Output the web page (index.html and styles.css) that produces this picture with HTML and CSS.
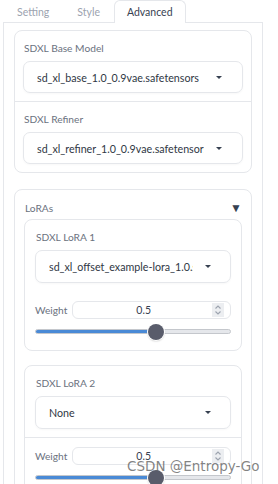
FILE: index.html
```html
<!DOCTYPE html>
<html lang="en">
<head>
  <meta charset="UTF-8">
  <meta name="viewport" content="width=device-width, initial-scale=1">
  <title>Advanced</title>
  <link rel="stylesheet" href="styles.css">
</head>
<body>

  <!-- Tabs -->
  <div class="tabs">
    <button class="tab">Setting</button>
    <button class="tab">Style</button>
    <button class="tab tab-active">Advanced</button>
  </div>

  <div class="panel">

    <!-- Models -->
    <div class="card">
      <div class="section">
        <div class="label">SDXL Base Model</div>
        <div class="dropdown">
          <span class="dropdown-text">sd_xl_base_1.0_0.9vae.safetensors</span>
          <span class="caret"></span>
        </div>
      </div>
      <div class="section section-split">
        <div class="label">SDXL Refiner</div>
        <div class="dropdown">
          <span class="dropdown-text">sd_xl_refiner_1.0_0.9vae.safetensors</span>
          <span class="caret"></span>
        </div>
      </div>
    </div>

    <!-- LoRAs -->
    <div class="card card-loras">
      <div class="accordion-head">
        <span class="label">LoRAs</span>
        <span class="arrow">&#9660;</span>
      </div>

      <div class="lora">
        <div class="lora-top">
          <div class="label">SDXL LoRA 1</div>
          <div class="dropdown dropdown-lora">
            <span class="dropdown-text">sd_xl_offset_example-lora_1.0.safetensors</span>
            <span class="caret"></span>
          </div>
        </div>
        <div class="weight">
          <div class="weight-row">
            <span class="weight-label">Weight</span>
            <div class="number">
              <span class="number-value">0.5</span>
              <span class="spin">
                <svg width="8" height="12" viewBox="0 0 8 12"><path d="M1.5 4.5 L4 2 L6.5 4.5 M1.5 7.5 L4 10 L6.5 7.5" fill="none" stroke="#9ca3af" stroke-width="1.1"/></svg>
              </span>
            </div>
          </div>
          <div class="slider">
            <div class="slider-fill" style="width: 61.7%"></div>
            <div class="slider-thumb" style="left: 61.7%"></div>
          </div>
        </div>
      </div>

      <div class="lora">
        <div class="lora-top lora-top-split">
          <div class="label">SDXL LoRA 2</div>
          <div class="dropdown dropdown-lora">
            <span class="dropdown-text">None</span>
            <span class="caret"></span>
          </div>
        </div>
        <div class="weight">
          <div class="weight-row">
            <span class="weight-label">Weight</span>
            <div class="number">
              <span class="number-value">0.5</span>
              <span class="spin">
                <svg width="8" height="12" viewBox="0 0 8 12"><path d="M1.5 4.5 L4 2 L6.5 4.5 M1.5 7.5 L4 10 L6.5 7.5" fill="none" stroke="#9ca3af" stroke-width="1.1"/></svg>
              </span>
            </div>
          </div>
          <div class="slider">
            <div class="slider-fill" style="width: 61.7%"></div>
            <div class="slider-thumb" style="left: 61.7%"></div>
          </div>
        </div>
      </div>
    </div>

  </div>

  <div class="watermark">CSDN @Entropy-Go</div>

</body>
</html>
```

FILE: styles.css
```css
/* Reset and Body */
* {
  box-sizing: border-box;
  margin: 0;
  padding: 0;
}

body {
  font-family: Lato, "Noto Sans", sans-serif;
  background-color: #fff;
  color: #374151;
  width: 278px;
  height: 484px;
  overflow: hidden;
  position: relative;
}

/* Tabs */
.tabs {
  display: flex;
  height: 23px;
  padding-left: 3px;
  position: relative;
  z-index: 1;
}

.tab {
  font-family: inherit;
  font-size: 10.5px;
  color: #9ca3af;
  background: none;
  border: 1px solid transparent;
  border-bottom: none;
  border-radius: 6px 6px 0 0;
  padding: 0 13px;
  height: 23px;
}

.tab-active {
  color: #374151;
  background-color: #fff;
  border-color: #e5e7eb;
  padding: 0 12px;
}

/* Panel */
.panel {
  margin: -1px 15px 0 3px;
  border: 1px solid #e5e7eb;
  border-bottom: none;
  padding: 7px 10px 0 10px;
  display: flex;
  flex-direction: column;
  gap: 16px;
}

.card {
  border: 1px solid #e5e7eb;
  border-radius: 8px;
}

.section {
  padding: 8px;
}

.section-split {
  border-top: 1px solid #e5e7eb;
}

.label {
  font-size: 10.2px;
  color: #6b7280;
  line-height: 18px;
  padding-left: 1px;
  margin-bottom: 4px;
}

/* Dropdown */
.dropdown {
  height: 32px;
  border: 1px solid #e5e7eb;
  border-radius: 7px;
  display: flex;
  align-items: center;
  padding: 0 20px 0 13px;
  gap: 12px;
  box-shadow: 0 1px 2px rgba(0, 0, 0, 0.03);
}

.dropdown-text {
  flex: 1;
  font-size: 10.7px;
  color: #2f3744;
  white-space: nowrap;
  overflow: hidden;
}

.caret {
  width: 0;
  height: 0;
  border-left: 3px solid transparent;
  border-right: 3px solid transparent;
  border-top: 3.5px solid #374151;
  flex-shrink: 0;
}

/* LoRAs accordion */
.card-loras {
  padding: 0 9px;
}

.accordion-head {
  display: flex;
  justify-content: space-between;
  align-items: center;
  padding: 6px 0 0 0;
  height: 29px;
}

.accordion-head .label {
  margin: 0;
}

.arrow {
  font-size: 12px;
  color: #374151;
  margin-right: 0;
}

.lora {
  border: 1px solid #e5e7eb;
  border-radius: 8px;
  padding: 0 10px;
  margin-bottom: 14px;
}

.lora-top {
  padding-top: 8px;
  padding-bottom: 18px;
}

.lora-top-split {
  padding-bottom: 8px;
  border-bottom: 1px solid #e5e7eb;
  margin: 0 -10px;
  padding-left: 10px;
  padding-right: 10px;
}

.dropdown-lora {
  height: 33px;
  padding-right: 19px;
}

.lora-top-split + .weight {
  padding-top: 9px;
}

/* Weight */
.weight {
  padding-bottom: 16px;
}

.weight-row {
  display: flex;
  align-items: center;
  gap: 5px;
}

.weight-label {
  font-size: 10.2px;
  color: #6b7280;
}

.number {
  flex: 1;
  height: 18px;
  border: 1px solid #e5e7eb;
  border-radius: 6px;
  display: flex;
  align-items: center;
  padding: 0 6px 0 0;
}

.number-value {
  flex: 1;
  text-align: center;
  font-size: 10.5px;
  color: #374151;
  padding-left: 2px;
}

.spin {
  width: 12px;
  height: 14px;
  background-color: #eceef1;
  display: flex;
  align-items: center;
  justify-content: center;
}

/* Slider */
.slider {
  position: relative;
  height: 5px;
  margin-top: 10px;
  border: 1px solid #c4c7cc;
  border-radius: 3px;
  background-color: #e5e7eb;
}

.slider-fill {
  height: 100%;
  background-color: #4a8ad6;
  border-radius: 3px 0 0 3px;
}

.slider-thumb {
  position: absolute;
  top: 50%;
  width: 16px;
  height: 16px;
  margin: -8px 0 0 -8px;
  border-radius: 50%;
  background-color: #595c6b;
  box-shadow: 0 0 0 1px #fff, 0 1px 2px rgba(0, 0, 0, 0.3);
}

/* Watermark */
.watermark {
  position: absolute;
  left: 127px;
  top: 458px;
  font-family: "DejaVu Sans", sans-serif;
  font-size: 13.5px;
  color: rgba(90, 90, 90, 0.75);
  white-space: nowrap;
}
```
